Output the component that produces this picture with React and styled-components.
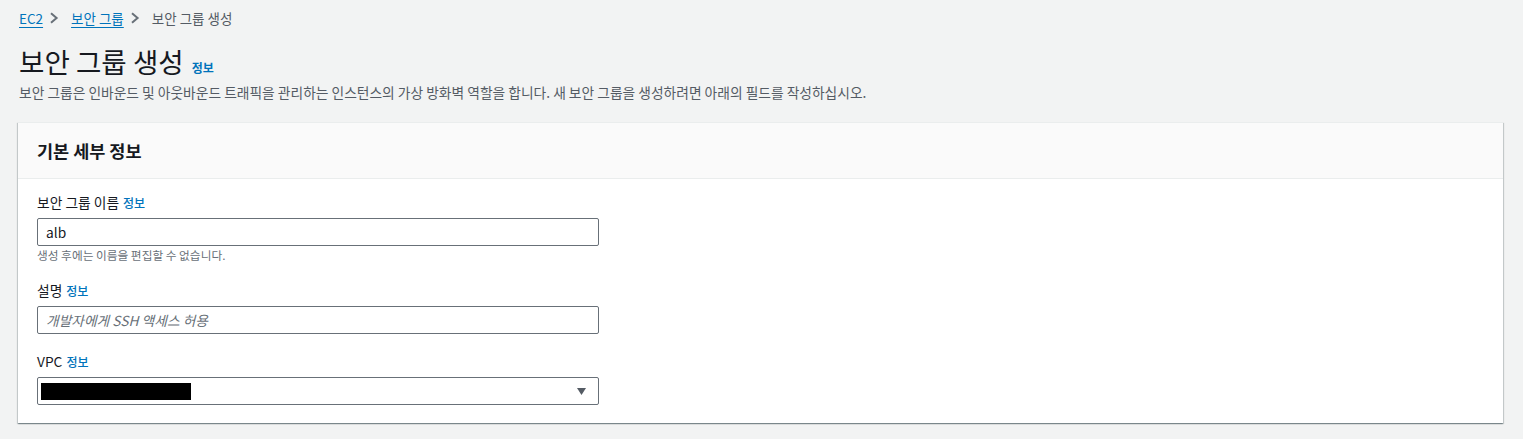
import React from "react";
import styled, { createGlobalStyle } from "styled-components";

const Global = createGlobalStyle`
  html, body { margin: 0; padding: 0; background: #f2f3f3; }
  body { font-family: "Noto Sans CJK KR", "Noto Sans", sans-serif; color: #16191f; }
`;

const Page = styled.div`
  padding: 8px 20px 16px 18px;
`;

const Breadcrumbs = styled.nav`
  display: flex;
  align-items: center;
  height: 20px;
  font-size: 13.5px;
  padding-left: 1px;
`;

const Crumb = styled.a`
  color: #0073bb;
  text-decoration: underline;
  text-underline-offset: 3px;
  line-height: 20px;
`;

const CurrentCrumb = styled.span`
  color: #545b64;
  line-height: 20px;
`;

const Chevron = styled.svg`
  width: 12px;
  height: 12px;
  margin: 0 11px 0 5px;
`;

const TitleRow = styled.div`
  display: flex;
  align-items: baseline;
  margin-top: 16px;
  padding-left: 1px;
`;

const Title = styled.h1`
  margin: 0;
  font-size: 27.6px;
  font-weight: 400;
  line-height: 34px;
  color: #16191f;
`;

const InfoLink = styled.a`
  color: #0073bb;
  font-size: 12px;
  font-weight: ${(p) => (p.$bold ? 700 : 500)};
  margin-left: ${(p) => p.$gap || 4}px;
  text-decoration: none;
`;

const Description = styled.p`
  margin: 4px 0 0 1px;
  font-size: 13.75px;
  line-height: 20px;
  color: #545b64;
`;

const Card = styled.section`
  margin-top: 20px;
  background: #fff;
  box-shadow: 0 1px 1px 0 rgba(0, 28, 36, 0.3), 1px 1px 1px 0 rgba(0, 28, 36, 0.15), -1px 1px 1px 0 rgba(0, 28, 36, 0.15);
  border-top: 1px solid #eaeded;
`;

const CardHeader = styled.header`
  background: #fafafa;
  border-bottom: 1px solid #eaeded;
  height: 55px;
  display: flex;
  align-items: center;
  padding: 0 19px;
`;

const CardTitle = styled.h2`
  margin: 0;
  font-size: 17.5px;
  font-weight: 700;
  color: #16191f;
`;

const CardBody = styled.div`
  padding: 13px 19px 18px;
  display: flex;
  flex-direction: column;
  gap: 17px;
`;

const Field = styled.div`
  display: flex;
  flex-direction: column;
  width: 562px;
`;

const Label = styled.label`
  font-size: 13.75px;
  line-height: 20px;
  color: #16191f;
  margin-bottom: 5px;
  display: flex;
  align-items: baseline;
`;

const Input = styled.input`
  box-sizing: border-box;
  height: 28px;
  width: 100%;
  border: 1px solid #687078;
  border-radius: 2px;
  padding: 0 8px;
  font-family: "Noto Sans CJK KR", "Noto Sans", sans-serif;
  font-size: 13.75px;
  color: #16191f;
  background: #fff;
  outline: none;
  &::placeholder {
    color: #687078;
    font-style: italic;
  }
`;

const Hint = styled.div`
  font-size: 11.7px;
  line-height: 16px;
  color: #687078;
  margin-top: 1px;
`;

const Select = styled.div`
  box-sizing: border-box;
  height: 28px;
  width: 100%;
  border: 1px solid #687078;
  border-radius: 2px;
  display: flex;
  align-items: center;
  justify-content: space-between;
  padding: 0 12px 0 3px;
`;

const Redacted = styled.div`
  width: 150px;
  height: 17px;
  background: #000;
`;

const Caret = styled.svg`
  width: 9px;
  height: 7px;
`;

const ChevronIcon = () => (
  <Chevron viewBox="0 0 12 12">
    <path d="M3 1.2 L8.6 6 L3 10.8" fill="none" stroke="#687078" strokeWidth="2" />
  </Chevron>
);

export default function App() {
  return (
    <>
      <Global />
      <Page>
        <Breadcrumbs>
          <Crumb href="#">EC2</Crumb>
          <ChevronIcon />
          <Crumb href="#">보안 그룹</Crumb>
          <ChevronIcon />
          <CurrentCrumb>보안 그룹 생성</CurrentCrumb>
        </Breadcrumbs>
        <TitleRow>
          <Title>보안 그룹 생성</Title>
          <InfoLink href="#" $gap={8} $bold>정보</InfoLink>
        </TitleRow>
        <Description>
          보안 그룹은 인바운드 및 아웃바운드 트래픽을 관리하는 인스턴스의 가상 방화벽 역할을 합니다. 새 보안 그룹을 생성하려면 아래의 필드를 작성하십시오.
        </Description>
        <Card>
          <CardHeader>
            <CardTitle>기본 세부 정보</CardTitle>
          </CardHeader>
          <CardBody>
            <Field>
              <Label>
                보안 그룹 이름<InfoLink href="#">정보</InfoLink>
              </Label>
              <Input defaultValue="alb" />
              <Hint>생성 후에는 이름을 편집할 수 없습니다.</Hint>
            </Field>
            <Field>
              <Label>
                설명<InfoLink href="#">정보</InfoLink>
              </Label>
              <Input placeholder="개발자에게 SSH 액세스 허용" />
            </Field>
            <Field>
              <Label>
                VPC<InfoLink href="#">정보</InfoLink>
              </Label>
              <Select>
                <Redacted />
                <Caret viewBox="0 0 9 7">
                  <path d="M0 0 H9 L4.5 7 Z" fill="#545b64" />
                </Caret>
              </Select>
            </Field>
          </CardBody>
        </Card>
      </Page>
    </>
  );
}
